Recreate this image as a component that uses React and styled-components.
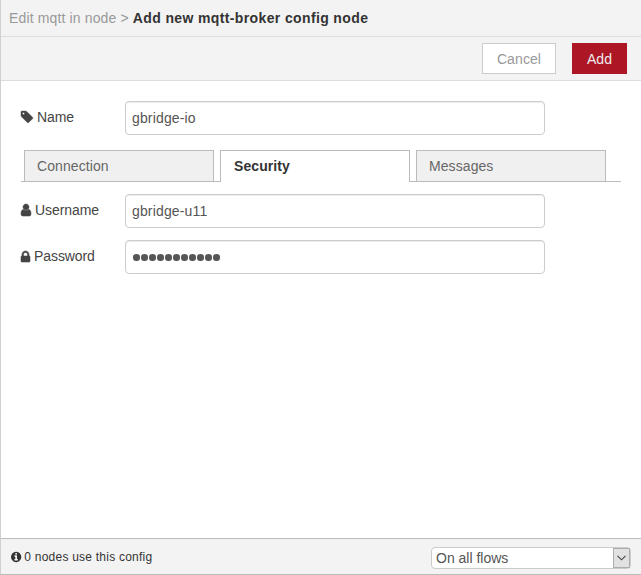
import React from "react";
import styled, { createGlobalStyle, css } from "styled-components";

const GlobalStyle = createGlobalStyle`
  * { box-sizing: border-box; }
  body {
    margin: 0;
    background: #fff;
    font-family: "Liberation Sans", Arial, sans-serif;
    font-size: 14px;
    line-height: 20px;
    color: #444;
  }
`;

const Tray = styled.div`
  display: flex;
  flex-direction: column;
  height: 575px;
  border-left: 1px solid #d0d0d0;
  border-bottom: 1px solid #bbb;
`;

const Header = styled.header`
  height: 37px;
  padding: 8px 8px 0;
  background: #f3f3f3;
  border-bottom: 1px solid #ddd;
  color: #999;
  white-space: pre;
  letter-spacing: 0.14px;
`;

const Title = styled.span`
  color: #333;
  font-weight: bold;
  letter-spacing: 0.37px;
`;

const Toolbar = styled.div`
  display: flex;
  justify-content: flex-end;
  gap: 16px;
  height: 44px;
  padding: 6px 14px 0 0;
  background: #f3f3f3;
  border-bottom: 1px solid #ddd;
`;

const Button = styled.button`
  width: ${(p) => (p.$primary ? 55 : 74)}px;
  height: 31px;
  padding: 0;
  border: 1px solid ${(p) => (p.$primary ? "#ad1625" : "#ccc")};
  background: ${(p) => (p.$primary ? "#ad1625" : "#fff")};
  color: ${(p) => (p.$primary ? "#eee" : "#999")};
  font: 14px/20px "Liberation Sans", Arial, sans-serif;
  letter-spacing: 0.1px;
`;

const Form = styled.main`
  flex: 1;
  padding: 20px 20px 0;
`;

const Row = styled.div`
  display: flex;
  height: 34px;
  margin-bottom: 12px;
`;

const Label = styled.label`
  display: flex;
  width: 104px;
  padding-top: 6px;
  gap: 4px;
  letter-spacing: -0.08px;
`;

const Glyph = styled.svg`
  flex: none;
  overflow: visible;
  fill: currentColor;
  stroke: currentColor;
  stroke-width: ${(p) => p.$weight};
  margin-top: ${(p) => p.$top}px;
`;

const Input = styled.input`
  width: 420px;
  height: 34px;
  padding: 0 6px;
  border: 1px solid #ccc;
  border-radius: 4px;
  box-shadow: inset 0 1px 1px rgba(0, 0, 0, 0.075);
  color: #555;
  background: #fff;
  font: 14px/20px "Liberation Sans", Arial, sans-serif;
  letter-spacing: ${(p) => p.$spacing || 0}px;
  outline: none;
`;

const MaskedValue = styled.div`
  display: flex;
  align-items: center;
  gap: 1.5px;
  width: 420px;
  height: 34px;
  padding: 1px 7px 0;
  border: 1px solid #ccc;
  border-radius: 4px;
  box-shadow: inset 0 1px 1px rgba(0, 0, 0, 0.075);
`;

const Dot = styled.span`
  width: 6.5px;
  height: 6.5px;
  border-radius: 50%;
  background: #555;
`;

const Tabs = styled.nav`
  display: flex;
  gap: 6px;
  width: 600px;
  height: 32px;
  margin: 15px 0 12px;
  padding-left: 3px;
  border-bottom: 1px solid #bbb;
`;

const Tab = styled.div`
  width: 190px;
  height: 31px;
  padding: 5px 12px 0;
  border: 1px solid #bbb;
  border-bottom: 0;
  background: #f0f0f0;
  color: #666;
  letter-spacing: 0.08px;
  ${(p) =>
    p.$active &&
    css`
      height: 32px;
      padding-left: 13px;
      background: #fff;
      color: #333;
      font-weight: bold;
    `}
`;

const Footer = styled.footer`
  display: flex;
  justify-content: space-between;
  height: 36px;
  padding: 8px 10px 0;
  background: #f3f3f3;
  border-top: 1px solid #bbb;
`;

const Usage = styled.div`
  display: flex;
  gap: 3px;
  color: #333;
  font-size: 12px;
  letter-spacing: 0.23px;
`;

const Select = styled.div`
  display: flex;
  justify-content: space-between;
  width: 200px;
  height: 22px;
  border: 1px solid #ccc;
  border-radius: 4px;
  background: #fff;
  color: #555;
  padding-left: 4px;
`;

const Arrow = styled.div`
  display: flex;
  align-items: center;
  justify-content: center;
  width: 17px;
  height: 20px;
  border: 1px solid #adadad;
  background: #e1e1e1;
`;

const icons = {
  tag: {
    box: "128 0 1536 1792",
    w: 12,
    h: 14,
    weight: 50,
    d: "M576 448q0-53-37.5-90.5t-90.5-37.5-90.5 37.5-37.5 90.5 37.5 90.5 90.5 37.5 90.5-37.5 37.5-90.5zm1067 576q0 53-37 90l-491 492q-39 37-91 37-53 0-90-37l-715-716q-38-37-64.5-101t-26.5-117v-416q0-52 38-90t90-38h416q53 0 117 26.5t102 64.5l715 714q37 39 37 91z",
  },
  user: {
    box: "256 0 1280 1792",
    w: 10,
    h: 14,
    weight: 70,
    d: "M1536 1399q0 109-62.5 187t-150.5 78h-854q-88 0-150.5-78t-62.5-187q0-85 8.5-160.5t31.5-152 58.5-131 94-89 134.5-34.5q131 128 313 128t313-128q76 0 134.5 34.5t94 89 58.5 131 31.5 152 8.5 160.5zm-256-887q0 159-112.5 271.5t-271.5 112.5-271.5-112.5-112.5-271.5 112.5-271.5 271.5-112.5 271.5 112.5 112.5 271.5z",
  },
  lock: {
    box: "320 0 1152 1792",
    w: 9,
    h: 14,
    weight: 70,
    d: "M640 768h512v-192q0-106-75-181t-181-75-181 75-75 181v192zm832 96v576q0 40-28 68t-68 28h-960q-40 0-68-28t-28-68v-576q0-40 28-68t68-28h32v-192q0-184 132-316t316-132 316 132 132 316v192h32q40 0 68 28t28 68z",
  },
  info: {
    box: "128 0 1536 1792",
    w: 10.3,
    h: 12,
    weight: 0,
    d: "M1152 1376v-160q0-14-9-23t-23-9h-96v-512q0-14-9-23t-23-9h-320q-14 0-23 9t-9 23v160q0 14 9 23t23 9h96v320h-96q-14 0-23 9t-9 23v160q0 14 9 23t23 9h448q14 0 23-9t9-23zm-128-896v-160q0-14-9-23t-23-9h-192q-14 0-23 9t-9 23v160q0 14 9 23t23 9h192q14 0 23-9t9-23zm640 416q0 209-103 385.5t-279.5 279.5-385.5 103-385.5-103-279.5-279.5-103-385.5 103-385.5 279.5-279.5 385.5-103 385.5 103 279.5 279.5 103 385.5z",
  },
};

function Icon({ name, top }) {
  const { box, w, h, d, weight } = icons[name];
  return (
    <Glyph viewBox={box} width={w} height={h} $top={top} $weight={weight}>
      <path d={d} />
    </Glyph>
  );
}

export default function App() {
  return (
    <>
      <GlobalStyle />
      <Tray>
        <Header>
          Edit mqtt in node &gt; <Title>Add new mqtt-broker config node</Title>
        </Header>
        <Toolbar>
          <Button>Cancel</Button>
          <Button $primary>Add</Button>
        </Toolbar>
        <Form>
          <Row>
            <Label>
              <Icon name="tag" top={3} />
              Name
            </Label>
            <Input defaultValue="gbridge-io" $spacing={0.15} />
          </Row>
          <Tabs>
            <Tab>Connection</Tab>
            <Tab $active>Security</Tab>
            <Tab>Messages</Tab>
          </Tabs>
          <Row>
            <Label>
              <Icon name="user" top={3} />
              Username
            </Label>
            <Input defaultValue="gbridge-u11" $spacing={0.15} />
          </Row>
          <Row>
            <Label>
              <Icon name="lock" top={4} />
              Password
            </Label>
            <MaskedValue>
              {Array.from({ length: 11 }, (_, i) => (
                <Dot key={i} />
              ))}
            </MaskedValue>
          </Row>
        </Form>
        <Footer>
          <Usage>
            <Icon name="info" top={4} />
            0 nodes use this config
          </Usage>
          <Select>
            On all flows
            <Arrow>
              <svg width="9" height="6" viewBox="0 0 9 6" fill="none" stroke="#444" strokeWidth="1.1">
                <path d="M0.5 0.8L4.5 4.8L8.5 0.8" />
              </svg>
            </Arrow>
          </Select>
        </Footer>
      </Tray>
    </>
  );
}
